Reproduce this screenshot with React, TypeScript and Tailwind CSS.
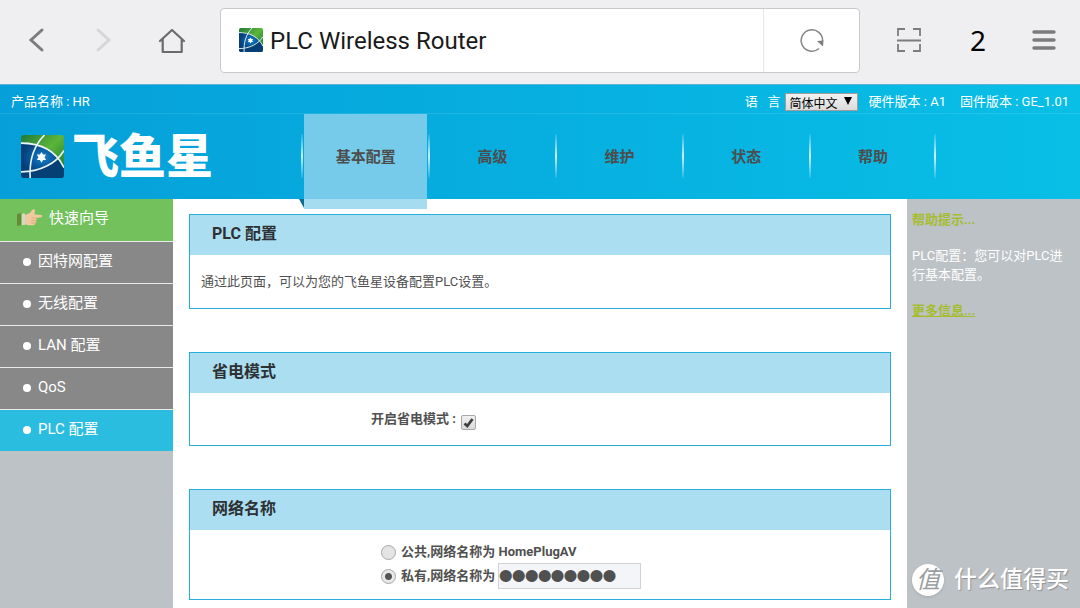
import { useState } from "react";
import type { ReactNode } from "react";

const NAV_ITEMS = ["基本配置", "高级", "维护", "状态", "帮助"];
const MENU_ITEMS = ["因特网配置", "无线配置", "LAN 配置", "QoS", "PLC 配置"];

function LogoMark({ id, className }: { id: string; className: string }) {
  return (
    <svg viewBox="0 0 42 42" className={className} aria-hidden="true">
      <defs>
        <linearGradient id={`${id}-green`} x1="0" y1="0" x2="0.8" y2="0.8">
          <stop offset="0" stopColor="#1f7a3a" />
          <stop offset="0.6" stopColor="#5cb53a" />
          <stop offset="1" stopColor="#2c8a35" />
        </linearGradient>
        <radialGradient id={`${id}-blue`} cx="0.6" cy="0.5" r="0.6">
          <stop offset="0" stopColor="#1c86cf" />
          <stop offset="0.5" stopColor="#0a5aa0" />
          <stop offset="1" stopColor="#063d76" />
        </radialGradient>
        <clipPath id={`${id}-clip`}>
          <rect width="42" height="42" rx="3" />
        </clipPath>
      </defs>
      <g clipPath={`url(#${id}-clip)`}>
        <rect width="42" height="42" fill={`url(#${id}-green)`} />
        <path d="M0 8C14 8 27 13 35 22C28 30 15 36 0 36V42H42V31L35 22Z" fill="#063f74" />
        <path
          d="M0 8C14 8 27 13 35 22C28 30 15 36 0 36Z"
          fill={`url(#${id}-blue)`}
        />
        <path
          d="M0 8C18 8 34 15 42 32M0 36C19 36 34 28 42 15M23 0C12 11 8 26 9 42"
          fill="none"
          stroke="#e9f5f8"
          strokeWidth="1.6"
        />
        <path
          d="M20 16.500l1.500 2.600h3l-1.500 2.600 1.500 2.600h-3L20 27l-1.500-2.700h-3l1.500-2.600-1.500-2.600h3z"
          fill="#fff"
        />
      </g>
    </svg>
  );
}

function BrowserBar() {
  return (
    <div className="flex h-[84px] items-center bg-[#efeff1] pb-1">
      <button aria-label="后退" className="ml-6 size-7">
        <svg viewBox="0 0 28 28" fill="none" stroke="#7c7c7c" strokeWidth="3">
          <path d="M18 4L7 14l11 10" strokeLinecap="round" />
        </svg>
      </button>
      <button aria-label="前进" className="ml-10 size-7">
        <svg viewBox="0 0 28 28" fill="none" stroke="#d6d6d8" strokeWidth="3">
          <path d="M6 4l11 10L6 24" strokeLinecap="round" />
        </svg>
      </button>
      <button aria-label="主页" className="ml-9 size-8">
        <svg viewBox="0 0 32 32" fill="none" stroke="#6b6b6b" strokeWidth="2.2">
          <path d="M4 17L16 6l12 11M6.700 15v13h19V15" strokeLinecap="round" strokeLinejoin="round" />
        </svg>
      </button>
      <div className="ml-8 flex h-[65px] flex-1 rounded border border-[#c9c9cb] bg-white">
        <div className="flex flex-1 items-center gap-[7px] pl-[18px]">
          <LogoMark id="fav" className="size-6" />
          <span className="pt-0.5 text-2xl text-[#1a1a1a]">PLC Wireless Router</span>
        </div>
        <button
          aria-label="刷新"
          className="flex w-24 items-center justify-center border-l border-[#e6e6e6]"
        >
          <svg viewBox="0 0 26 26" className="size-[26px]" fill="none">
            <path d="M20 21.500A10.700 10.700 0 1 1 23.600 14" stroke="#868686" strokeWidth="1.5" />
            <path d="M18 14l6.500-.5-.5 6z" fill="#7c7c7c" />
          </svg>
        </button>
      </div>
      <button aria-label="扫描" className="ml-9 size-[26px]">
        <svg viewBox="0 0 26 26" fill="none" stroke="#7c7c7c" strokeWidth="1.8">
          <path d="M2 9V2h7M17 2h7v7M2 17v7h7M17 24h7v-7M1 13.500h24" />
        </svg>
      </button>
      <button
        aria-label="标签页"
        className="ml-9 w-10 font-['Noto_Sans'] text-[28px] leading-8 text-black"
      >
        2
      </button>
      <button aria-label="菜单" className="mr-6 ml-[34px] size-6">
        <svg viewBox="0 0 24 24" stroke="#7c7c7c" strokeWidth="3.4" strokeLinecap="round">
          <path d="M2 4h20M2 12h20M2 20h20" />
        </svg>
      </button>
    </div>
  );
}

function Header() {
  return (
    <header className="bg-linear-to-r from-[#069fd9] to-[#09bfe6] text-white">
      {/* product info */}
      <div className="flex h-[30px] items-center border-t border-b border-t-[#5cb3d3] border-b-white/10 px-[11px] pt-1.5 text-[13px]">
        <span className="flex-1">产品名称 : HR</span>
        <label htmlFor="lang" className="whitespace-pre">
          语   言
        </label>
        <div className="relative mr-[11px] ml-1">
          <select
            id="lang"
            className="block h-[18px] w-[73px] appearance-none overflow-hidden border border-[#a39c98] bg-linear-to-b from-[#f2f2f2] to-[#dcdcdc] pt-0.5 pl-1 text-xs text-black"
          >
            <option>简体中文</option>
            <option>English</option>
          </select>
          <svg viewBox="0 0 8 8" className="pointer-events-none absolute top-1 right-1.5 size-2">
            <path d="M0 0h8L4 8z" />
          </svg>
        </div>
        <span className="mr-3.5">硬件版本 : A1</span>
        <span>固件版本 : GE_1.01</span>
      </div>

      {/* logo + nav */}
      <div className="flex h-[85px]">
        <a href="#home" className="flex w-[28%] items-center gap-2 pl-[21px]">
          <LogoMark id="brand" className="size-[43px]" />
          <span className="text-[47px] leading-none font-black">飞鱼星</span>
        </a>
        <nav className="flex max-w-[634px] flex-1 text-[15px] font-bold text-[#4d4d4d]">
          {NAV_ITEMS.map((item, i) => (
            <a
              key={item}
              href="#nav"
              className="relative flex flex-1 items-center justify-center pt-0.5"
            >
              <span className="absolute top-5 -left-px h-11 w-0.5 bg-linear-to-b from-white/10 via-white/80 to-white/10" />
              {i === 0 && (
                <>
                  <span className="absolute inset-x-0.5 inset-y-0 bg-[#75cbe9]" />
                  <span className="absolute inset-x-0.5 top-full z-10 h-2.5 bg-[#a5dcf0]" />
                  <svg viewBox="0 0 5 9" className="absolute top-full -left-[3px] z-10 h-[9px] w-[5px]">
                    <path d="M0 0h5v9z" fill="#0a6f93" />
                  </svg>
                </>
              )}
              <span className="relative">{item}</span>
              {i === NAV_ITEMS.length - 1 && (
                <span className="absolute top-5 right-0 h-11 w-0.5 bg-linear-to-b from-white/10 via-white/80 to-white/10" />
              )}
            </a>
          ))}
        </nav>
      </div>
    </header>
  );
}

function Sidebar() {
  return (
    <aside className="w-[173px] shrink-0 bg-[#bdc2c6]">
      <ul className="flex flex-col gap-px bg-[#e9e9e9] text-[15px] text-white">
        <li>
          <a href="#wizard" className="flex h-[42px] items-center gap-1.5 bg-[#72c15d] pb-1 pl-[17px]">
            <svg viewBox="0 0 26 18" className="h-[18px] w-[26px]" aria-hidden="true">
              <path d="M0 5l5-1v12l-5 1z" fill="#648c35" />
              <path d="M4.500 4.500H8V16H4.500z" fill="#cfdcc0" />
              <path
                d="M8 6l5-2 2-3q2.500-1.500 3 .5L17.500 5.500 24.500 6q1.500 1 0 2.300L19 9q1.200 1.500 0 2.500.8 1.500-.5 2.500 0 1.800-2 2.300H11l-3-1z"
                fill="#f1c9a0"
              />
              <path d="M14.500 9H19M14.500 11.600h4.500M14 14h4.500" stroke="#d99f72" strokeWidth="0.7" />
            </svg>
            快速向导
          </a>
        </li>
        {MENU_ITEMS.map((item) => (
          <li key={item}>
            <a
              href="#menu"
              className={
                item === "PLC 配置"
                  ? "flex h-[41px] items-center gap-[7px] bg-[#2bbde0] pb-0.5 pl-[23px]"
                  : "flex h-[41px] items-center gap-[7px] bg-[#888888] pb-0.5 pl-[23px]"
              }
            >
              <span className="size-2 rounded-full bg-white" />
              {item}
            </a>
          </li>
        ))}
      </ul>
    </aside>
  );
}

function Panel({ title, children }: { title: string; children: ReactNode }) {
  return (
    <section className="border border-[#27afdb]">
      <h2 className="flex h-10 items-center bg-[#abdef1] px-[22px] pb-0.5 text-base font-bold text-[#2e3133]">
        {title}
      </h2>
      {children}
    </section>
  );
}

const radioClass =
  "size-[15px] appearance-none rounded-full border border-[#a8a8a8] bg-[#e4e4e4] checked:bg-[radial-gradient(circle,#555_0_3px,#e8e8e8_4px)]";

export default function App() {
  const [powerSave, setPowerSave] = useState(true);
  const [network, setNetwork] = useState("private");

  return (
    <div className="relative flex min-h-screen flex-col bg-white font-[Roboto,'Noto_Sans_CJK_SC',sans-serif]">
      <BrowserBar />
      <Header />

      <div className="flex flex-1">
        <Sidebar />

        <main className="flex flex-1 flex-col gap-[43px] px-4 pt-[15px] pb-[7px] text-[13px] text-[#505050]">
          <Panel title="PLC 配置">
            <p className="flex h-[53px] items-center px-[11px]">
              通过此页面，可以为您的飞鱼星设备配置PLC设置。
            </p>
          </Panel>

          <Panel title="省电模式">
            <div className="flex h-[52px] items-center font-bold">
              <label htmlFor="power" className="w-[38%] text-right">
                开启省电模式 :
              </label>
              <span className="relative mt-1.5 ml-[5px] size-[15px]">
                <input
                  id="power"
                  type="checkbox"
                  checked={powerSave}
                  onChange={(e) => setPowerSave(e.target.checked)}
                  className="block size-[15px] appearance-none rounded-xs border border-[#a8a8a8] bg-linear-to-b from-[#f0f0f0] to-[#dadada]"
                />
                {powerSave && (
                  <svg viewBox="0 0 15 15" className="pointer-events-none absolute inset-0" fill="none">
                    <path d="M3.500 8.500l2.800 2.500L11.500 4" stroke="#3f3f3f" strokeWidth="2.800" />
                  </svg>
                )}
              </span>
            </div>
          </Panel>

          <Panel title="网络名称">
            <div className="flex flex-col pt-2.5 pb-[11px] pl-[27.3%] font-bold">
              <div className="flex h-6 items-center gap-[5px]">
                <input
                  id="public"
                  type="radio"
                  name="network"
                  checked={network === "public"}
                  onChange={() => setNetwork("public")}
                  className={radioClass}
                />
                <label htmlFor="public">公共,网络名称为 HomePlugAV</label>
              </div>
              <div className="flex h-6 items-center gap-[5px]">
                <input
                  id="private"
                  type="radio"
                  name="network"
                  checked={network === "private"}
                  onChange={() => setNetwork("private")}
                  className={radioClass}
                />
                <div className="flex items-center gap-[3px]">
                  <label htmlFor="private">私有,网络名称为</label>
                  <input
                    type="password"
                    aria-label="私有网络名称"
                    defaultValue="HomePlug1"
                    className="h-[26px] w-[143px] border border-[#d2d2d2] bg-[#f4f5f8] font-['Liberation_Sans'] text-[37px] font-normal text-[#505050] [-webkit-text-stroke:2px_#505050]"
                  />
                </div>
              </div>
            </div>
          </Panel>
        </main>

        <aside className="flex w-[173px] shrink-0 flex-col gap-[17px] bg-[#bdc2c6] px-[5px] pt-[11px] text-[13px] leading-[19px] text-white">
          <h3 className="font-bold text-[#a5bd2e]">帮助提示...</h3>
          <p>PLC配置：您可以对PLC进行基本配置。</p>
          <a href="#more" className="font-bold text-[#a5bd2e] underline">
            更多信息...
          </a>
        </aside>
      </div>

      {/* watermark */}
      <div className="absolute right-[11px] bottom-[11px] flex items-center gap-2.5 text-white">
        <span className="flex size-8 items-center justify-center rounded-full bg-white text-2xl text-[#9a9ea2] italic shadow-sm">
          值
        </span>
        <span className="text-[23px] font-medium text-shadow-[1px_1px_1px_#8e9296]">什么值得买</span>
      </div>
    </div>
  );
}
